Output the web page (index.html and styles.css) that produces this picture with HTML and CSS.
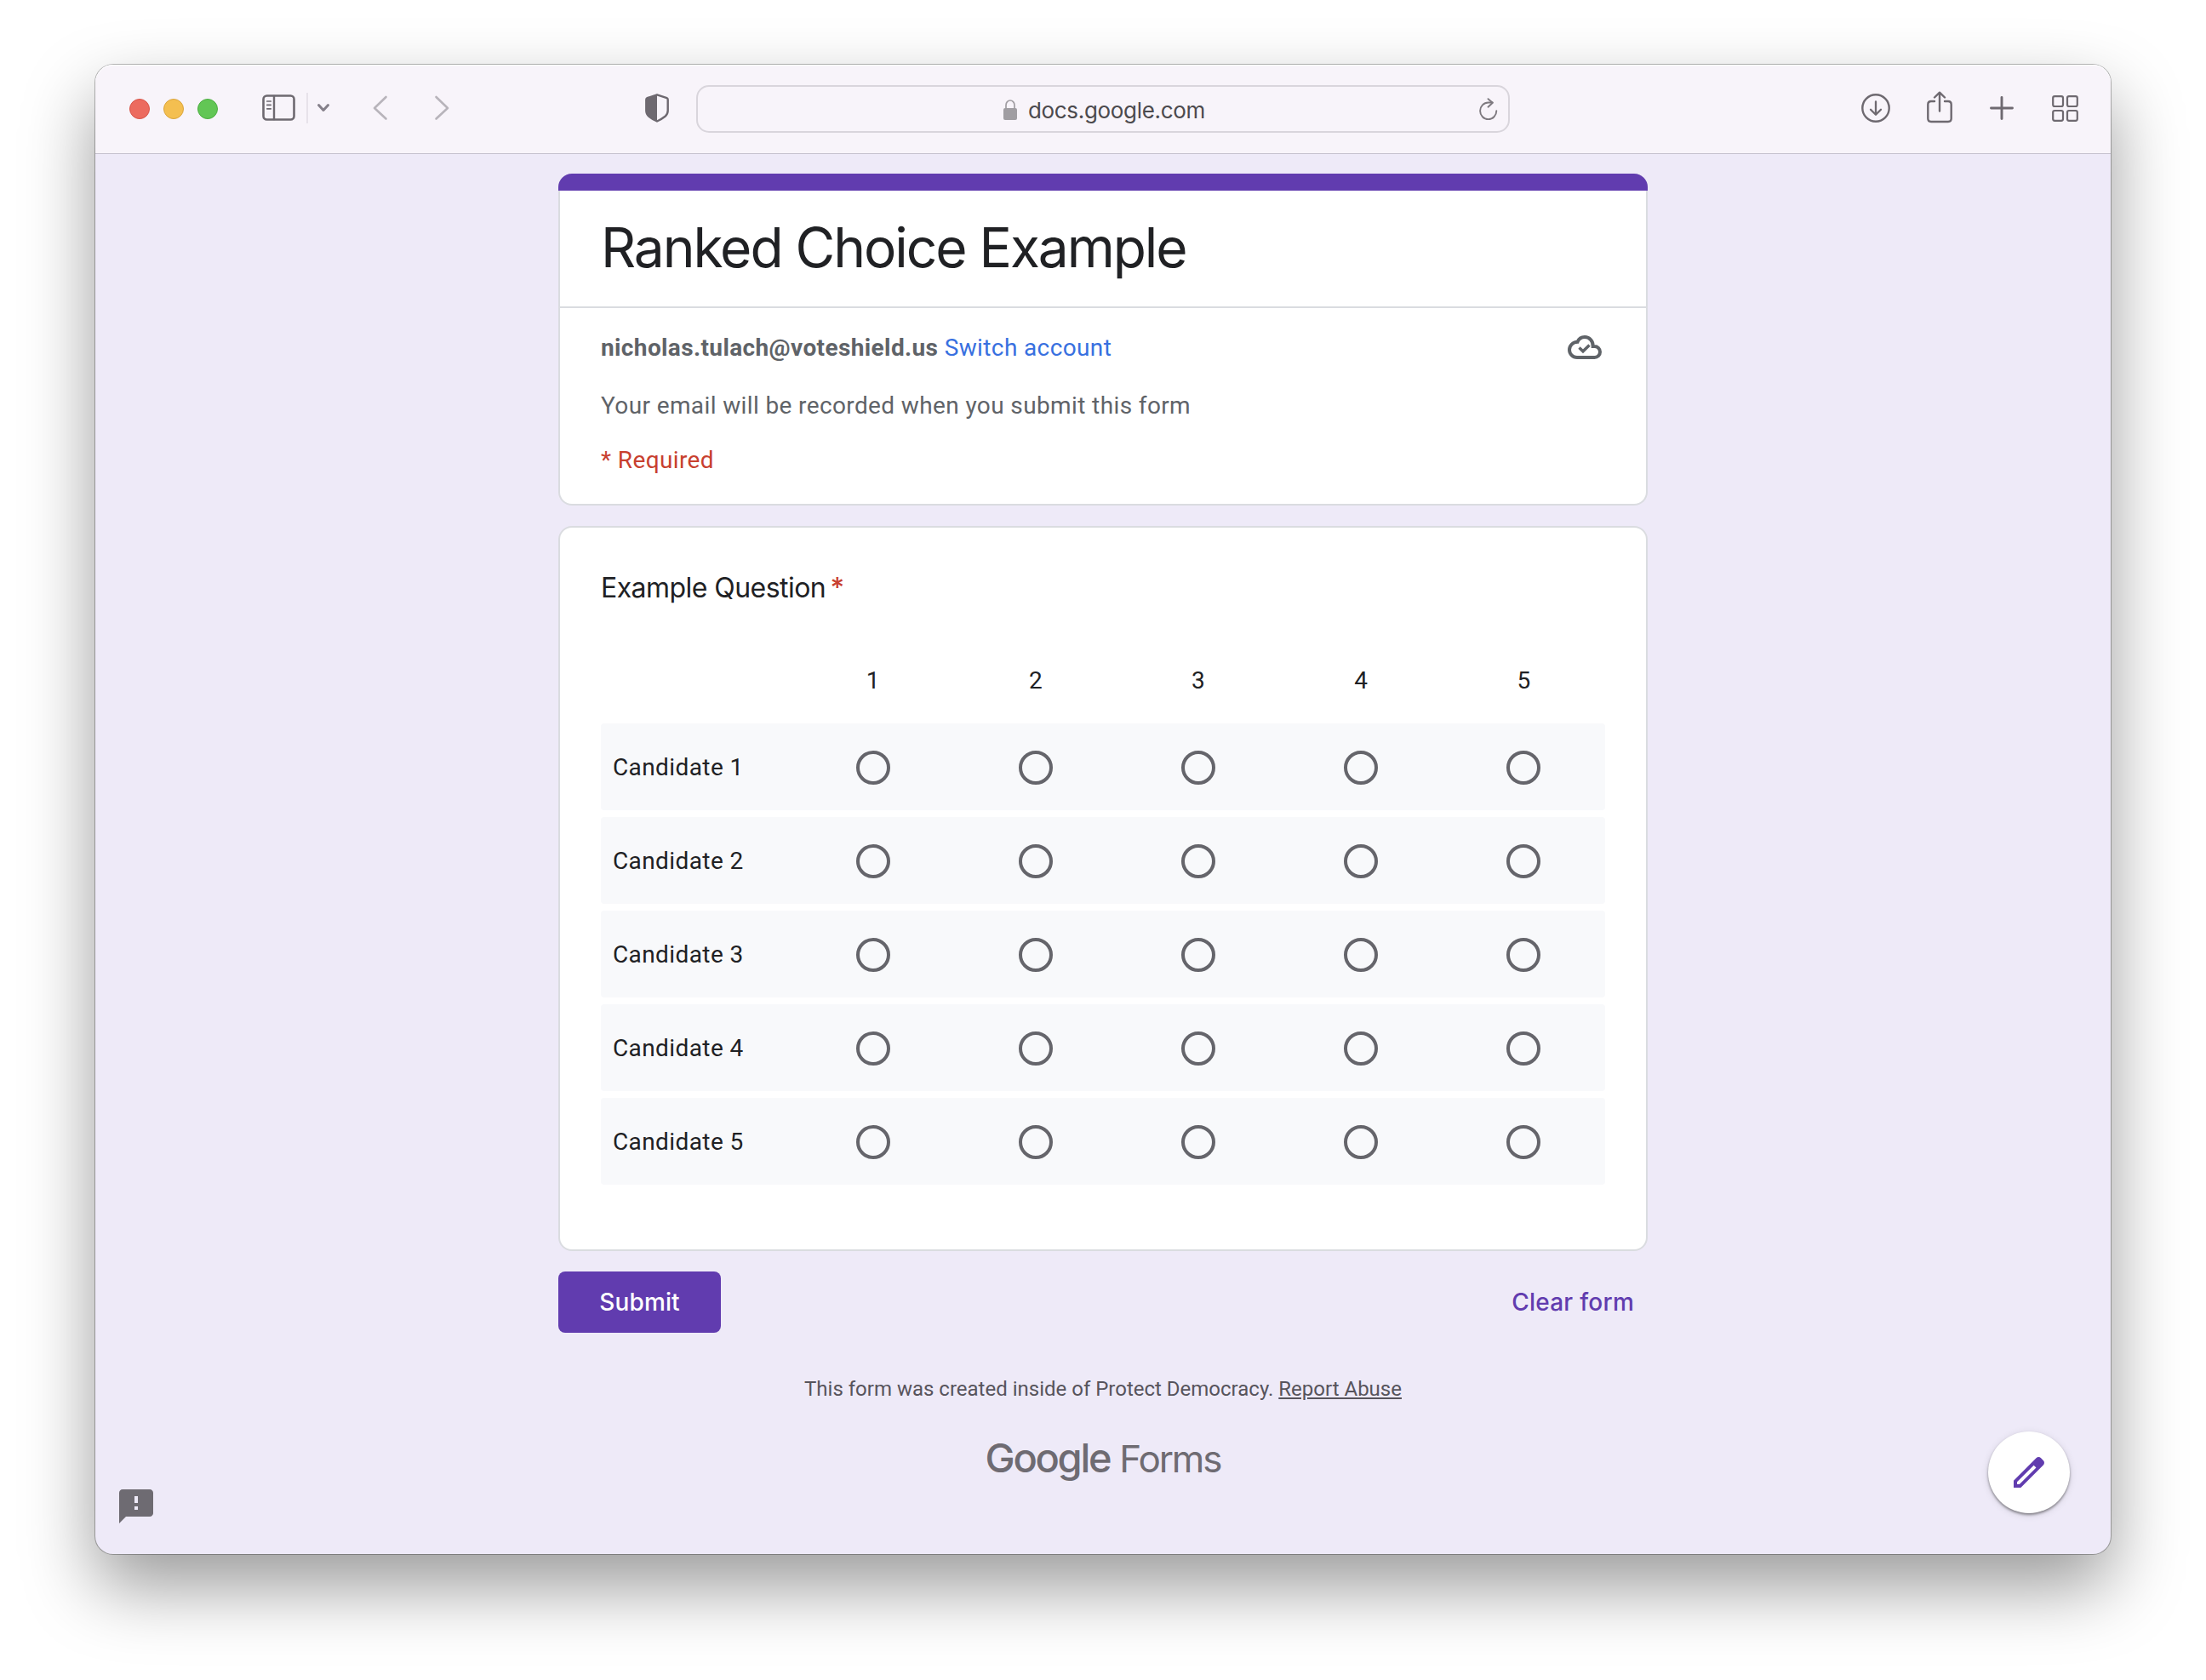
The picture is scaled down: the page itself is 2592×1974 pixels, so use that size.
FILE: index.html
```html
<!DOCTYPE html>
<html lang="en">
<head>
<meta charset="utf-8">
<title>Ranked Choice Example</title>
<link rel="stylesheet" href="styles.css">
</head>
<body>
<main class="window">
  <header class="toolbar">
    <div class="lights"><i class="light red"></i><i class="light yellow"></i><i class="light green"></i></div>
    <svg class="ico sidebar" width="40" height="32" viewBox="0 0 40 32"><rect x="1.5" y="1.5" width="36" height="28" rx="4" stroke-width="2.6"/><path d="M14 2v27" stroke-width="2.4"/><path d="M5.8 8h4.4M5.8 12.3h4.4M5.8 16.8h4.4" stroke-width="1.7"/></svg>
    <span class="separator"></span>
    <svg class="ico chevron" width="16" height="12" viewBox="0 0 16 12"><path d="M2.5 2.5 8 8.5l5.500-6" stroke-width="3"/></svg>
    <svg class="ico back" width="18" height="30" viewBox="0 0 18 30"><path d="M15.500 2 2 15l13.500 12.500" stroke-width="2.6"/></svg>
    <svg class="ico forward" width="18" height="30" viewBox="0 0 18 30"><path d="M2.500 2 16 15 2.500 27.500" stroke-width="2.6"/></svg>
    <svg class="ico shield" width="28" height="34" viewBox="0 0 28 34"><path d="M14 1.300 25.500 5.200q1.200.5 1.200 1.800v13q0 4-3.200 6.800Q19.500 30 14 32.500 8.500 30 4.500 26.800 1.300 24 1.300 20V7q0-1.300 1.200-1.800Z" stroke-width="2.4"/><path d="M14 1.300 2.500 5.200Q1.300 5.700 1.300 7v13q0 4 3.200 6.800Q8.500 30 14 32.500Z" class="solid"/></svg>
    <div class="address">
      <svg class="lock" width="16" height="24" viewBox="0 0 16 24"><rect y="10" width="16" height="14" rx="2"/><path d="M3 11V6.500a5 5.500 0 0 1 10 0V11" fill="none" stroke="#a09da2" stroke-width="1.700"/></svg>
      <span class="host">docs.google.com</span>
      <svg class="ico reload" width="22" height="27" viewBox="0 0 22 27"><path d="M20.300 15.300a9.600 9.800 0 1 1-9.600-9.800h5" stroke-width="1.900"/><path d="m10.500 1.200 5.300 4.500-5.300 5" stroke-width="1.900"/></svg>
    </div>
    <svg class="ico download" width="34" height="34" viewBox="0 0 34 34"><circle cx="17" cy="17" r="15.700" stroke-width="2.400"/><path d="M17 9.500v15M11 18.800l6 6 6-6" stroke-width="2.300"/></svg>
    <svg class="ico share" width="30" height="38" viewBox="0 0 30 38"><path d="M9 12H5q-3.700 0-3.700 3.700v16.600Q1.300 36 5 36h20q3.700 0 3.700-3.700V15.700Q28.700 12 25 12h-4M15 23.500V2M9 7.500 15 1.700l6 5.800" stroke-width="2.400"/></svg>
    <svg class="ico plus" width="28" height="28" viewBox="0 0 28 28"><path d="M14 1.500v25M1.500 14h25" stroke-width="2.900"/></svg>
    <svg class="ico grid" width="31" height="31" viewBox="0 0 31 31"><g stroke-width="2.200"><rect x="1.200" y="1.200" width="11.800" height="11.800" rx="2"/><rect x="18" y="1.200" width="11.800" height="11.800" rx="2"/><rect x="1.200" y="18" width="11.800" height="11.800" rx="2"/><rect x="18" y="18" width="11.800" height="11.800" rx="2"/></g></svg>
  </header>

  <section class="page">
    <div class="form">
      <section class="card intro">
        <h1 class="title">Ranked Choice Example</h1>
        <div class="details">
          <div class="account">
            <p><b class="email">nicholas.tulach@voteshield.us</b> <a class="switch">Switch account</a></p>
            <svg class="cloud" width="40" height="28" viewBox="0 0 40 28"><path d="M11 26h20.500a6.500 6.500 0 0 0 0-13h-1.800C30 6.500 25.500 2 20 2c-4 0-7 2-8.500 5.800C6 8 2 12 2 17s4 9 9 9Z" fill="none" stroke="#5f6368" stroke-width="4"/><path d="m13.500 14.500 4.500 4.300 7.500-7.300" fill="none" stroke="#5f6368" stroke-width="3.400"/></svg>
          </div>
          <p class="notice">Your email will be recorded when you submit this form</p>
          <p class="required">* Required</p>
        </div>
      </section>

      <section class="card question">
        <h2 class="prompt">Example Question <span class="star">*</span></h2>
        <div class="row heads"><span></span><span>1</span><span>2</span><span>3</span><span>4</span><span>5</span></div>
        <div class="rows">
          <div class="row choice"><span class="label">Candidate 1</span><i class="radio"></i><i class="radio"></i><i class="radio"></i><i class="radio"></i><i class="radio"></i></div>
          <div class="row choice"><span class="label">Candidate 2</span><i class="radio"></i><i class="radio"></i><i class="radio"></i><i class="radio"></i><i class="radio"></i></div>
          <div class="row choice"><span class="label">Candidate 3</span><i class="radio"></i><i class="radio"></i><i class="radio"></i><i class="radio"></i><i class="radio"></i></div>
          <div class="row choice"><span class="label">Candidate 4</span><i class="radio"></i><i class="radio"></i><i class="radio"></i><i class="radio"></i><i class="radio"></i></div>
          <div class="row choice"><span class="label">Candidate 5</span><i class="radio"></i><i class="radio"></i><i class="radio"></i><i class="radio"></i><i class="radio"></i></div>
        </div>
      </section>

      <div class="actions">
        <button class="submit">Submit</button>
        <a class="clear">Clear form</a>
      </div>
      <p class="origin">This form was created inside of Protect Democracy. <a class="report">Report Abuse</a></p>
      <p class="brand"><span class="google">Google</span><span class="forms">Forms</span></p>
    </div>
    <svg class="feedback" width="48" height="48" viewBox="0 0 24 24"><path d="M20 2H4c-1.100 0-2 .9-2 2v18l4-4h14c1.100 0 2-.9 2-2V4c0-1.100-.9-2-2-2Zm-7 12h-2v-2h2v2Zm0-4h-2V6h2v4Z"/></svg>
    <div class="fab"><svg width="48" height="48" viewBox="0 0 24 24"><path d="M20.410 4.940l-1.350-1.350c-.78-.78-2.050-.78-2.830 0L3 16.820V21h4.180L20.410 7.770c.79-.78.79-2.050 0-2.830zM6.410 19.060L5 19v-1.360l9.820-9.820 1.410 1.410-9.820 9.830z"/></svg></div>
  </section>
</main>
</body>
</html>
```
FILE: styles.css
```css
* { box-sizing: border-box; }
body { margin: 0; min-height: 1974px; padding: 76px 112px; background: #fff; font-family: Roboto, "Liberation Sans", sans-serif; color: #202124; }
p, h1, h2 { margin: 0; font-weight: 400; }
svg { display: block; flex: none; }

.window { position: relative; height: 1750px; display: flex; flex-direction: column; border-radius: 21px; background: #eeeaf8; box-shadow: 0 0 0 1px rgba(0, 0, 0, .27), 0 38px 84px rgba(0, 0, 0, .4); }

.toolbar { height: 105px; flex: none; display: flex; align-items: center; padding: 0 38px 3px 40px; border-bottom: 1px solid #c5c1ce; border-radius: 21px 21px 0 0; background: #f8f4fa; box-shadow: inset 0 1px #fff; }
.lights { display: flex; gap: 16px; padding-top: 2px; }
.light { width: 24px; height: 24px; border-radius: 50%; border: 1px solid; }
.red { background: #ec6b5f; border-color: #d85549; }
.yellow { background: #f4bf50; border-color: #dba53c; }
.green { background: #62c655; border-color: #4cae41; }
.ico { fill: none; stroke: #6e6970; stroke-linecap: round; stroke-linejoin: round; }
.sidebar { margin-left: 52px; }
.separator { width: 2px; height: 36px; margin-left: 12px; background: #e7e2ea; }
.chevron { margin-left: 10px; stroke: #85808a; }
.back { margin-left: 50px; stroke: #b8b4bb; }
.forward { margin-left: 54px; stroke: #b8b4bb; }
.shield { margin-left: 230px; }
.solid { fill: #6e6970; stroke: none; }
.address { width: 956px; height: 56px; display: flex; align-items: center; margin: 3px 0 0 32px; border: 2px solid #d9d5dc; border-radius: 15px; padding: 0 12px 0 359px; }
.lock { fill: #a09da2; margin-top: 2px; }
.host { margin-left: 13px; font: 26px/40px Inter, sans-serif; letter-spacing: -.33px; color: #4c4a4e; padding-top: 4px; }
.reload { margin-left: auto; stroke: #7d797f; }
.download { margin-left: 413px; margin-top: 1px; }
.share { margin-left: 43px; margin-top: -1px; }
.plus { margin-left: 44px; }
.grid { margin-left: auto; margin-top: 1px; }

.page { flex: 1; padding-top: 23px; }
.form { width: 1280px; margin: 0 auto; }
.card { border: 2px solid #dadce0; border-radius: 16px; background: #fff; }
.intro { position: relative; height: 390px; margin-bottom: 24px; border-top: 0; }
.intro::before { content: ""; position: absolute; left: -2px; right: -2px; top: 0; height: 20px; border-radius: 16px 16px 0 0; background: #613caf; }
.title { height: 158px; padding: 20px 48px 0; border-bottom: 2px solid #dadce0; font: 64px/134px Inter, sans-serif; letter-spacing: -2.05px; }
.details { padding: 27px 52px 0 48px; font-size: 28px; line-height: 40px; letter-spacing: .38px; color: #5f6368; }
.account { display: flex; justify-content: space-between; align-items: center; }
.cloud { margin-top: -2px; }
.email { font-weight: 700; }
.switch { color: #3870e0; }
.notice { margin-top: 28px; }
.required { margin-top: 24px; color: #c8402f; }

.question { height: 852px; padding: 51px 48px 0; }
.prompt { font: 32px/40px Inter, sans-serif; letter-spacing: -.55px; }
.star { margin-left: -3px; font-weight: 500; color: #c8402f; }
.row { display: grid; grid-template-columns: 224px repeat(5, 1fr); align-items: center; justify-items: center; font-size: 28px; line-height: 40px; }
.heads { margin: 69px 0 30px; }
.rows { display: grid; gap: 8px; }
.choice { height: 102px; padding-top: 2px; border-radius: 4px; background: #f8f9fb; }
.label { justify-self: start; padding-left: 14px; letter-spacing: .4px; }
.radio { width: 40px; height: 40px; border: 4px solid #65656b; border-radius: 50%; }

.actions { display: flex; justify-content: space-between; align-items: center; margin-top: 24px; font: 500 28px/72px Inter, sans-serif; }
.submit { width: 191px; height: 72px; padding: 0; border: 0; border-radius: 8px; background: #613caf; color: #fff; font: inherit; letter-spacing: .15px; }
.clear { margin-right: 16px; color: #613caf; letter-spacing: .25px; }
.origin { margin-top: 50px; text-align: center; font-size: 24px; line-height: 32px; color: #57545c; }
.report { text-decoration: underline; }
.brand { display: flex; justify-content: center; align-items: baseline; gap: 11px; margin-top: 35px; font: 44px/60px Inter, sans-serif; color: #6e6b72; }
.google { font-size: 47px; font-weight: 500; letter-spacing: -2.3px; }
.forms { letter-spacing: -2.1px; }

.feedback { position: absolute; left: 24px; bottom: 32px; fill: #6e6b72; }
.fab { position: absolute; right: 48px; bottom: 48px; width: 96px; height: 96px; display: flex; align-items: center; justify-content: center; border-radius: 50%; background: #fff; fill: #613caf; box-shadow: 0 2px 3px rgba(0, 0, 0, .4), 0 2px 10px rgba(0, 0, 0, .12); }
```
